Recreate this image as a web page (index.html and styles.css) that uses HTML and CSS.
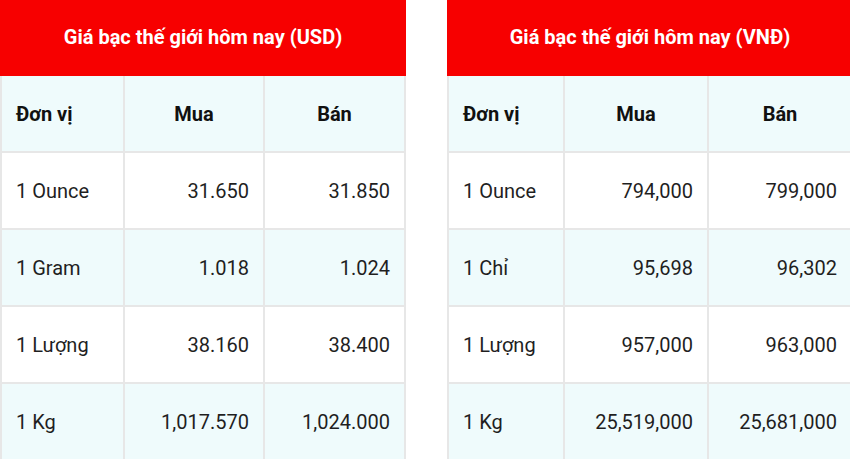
FILE: index.html
```html
<!DOCTYPE html>
<html lang="vi">
<head>
<meta charset="utf-8">
<link rel="stylesheet" href="styles.css">
</head>
<body>
<div class="page">
  <div class="tbl tbl-usd">
    <div class="title">Giá bạc thế giới hôm nay (USD)</div>
    <div class="cell alt head left">Đơn vị</div>
    <div class="cell alt head">Mua</div>
    <div class="cell alt head">Bán</div>
    <div class="cell left">1 Ounce</div>
    <div class="cell num">31.650</div>
    <div class="cell num">31.850</div>
    <div class="cell alt left">1 Gram</div>
    <div class="cell alt num">1.018</div>
    <div class="cell alt num">1.024</div>
    <div class="cell left">1 Lượng</div>
    <div class="cell num">38.160</div>
    <div class="cell num">38.400</div>
    <div class="cell alt left">1 Kg</div>
    <div class="cell alt num">1,017.570</div>
    <div class="cell alt num">1,024.000</div>
  </div>
  <div class="tbl tbl-vnd">
    <div class="title">Giá bạc thế giới hôm nay (VNĐ)</div>
    <div class="cell alt head left">Đơn vị</div>
    <div class="cell alt head">Mua</div>
    <div class="cell alt head">Bán</div>
    <div class="cell left">1 Ounce</div>
    <div class="cell num">794,000</div>
    <div class="cell num">799,000</div>
    <div class="cell alt left">1 Chỉ</div>
    <div class="cell alt num">95,698</div>
    <div class="cell alt num">96,302</div>
    <div class="cell left">1 Lượng</div>
    <div class="cell num">957,000</div>
    <div class="cell num">963,000</div>
    <div class="cell alt left">1 Kg</div>
    <div class="cell alt num">25,519,000</div>
    <div class="cell alt num">25,681,000</div>
  </div>
</div>
</body>
</html>
```
FILE: styles.css
```css
html, body {
  margin: 0;
  padding: 0;
  background: #ffffff;
  overflow: hidden;
}
body {
  width: 850px;
  height: 459px;
  font-family: Roboto, "Liberation Sans", Arial, sans-serif;
  color: #1f1f1f;
}
.page {
  display: flex;
  gap: 41px;
  width: 850px;
}
.tbl {
  display: grid;
  gap: 2px;
  padding: 0 2px 2px 2px;
  background: #e7e7e7;
  grid-template-rows: 74px repeat(5, 75px);
  flex: none;
}
.tbl-usd {
  grid-template-columns: 121px 138px 139px;
}
.tbl-vnd {
  grid-template-columns: 114px 142px 142px;
}
.title {
  grid-column: 1 / -1;
  background: #f70000;
  color: #ffffff;
  font-weight: 700;
  font-size: 20px;
  display: flex;
  align-items: center;
  justify-content: center;
  margin: 0 -2px -2px -2px;
  padding-bottom: 2px;
}
.cell {
  background: #ffffff;
  font-size: 20px;
  display: flex;
  align-items: center;
  padding: 0 14px;
}
.cell.alt {
  background: #effbfc;
}
.head {
  font-weight: 700;
  justify-content: center;
  color: #111111;
}
.head.left,
.left {
  justify-content: flex-start;
}
.num {
  justify-content: flex-end;
}
```
